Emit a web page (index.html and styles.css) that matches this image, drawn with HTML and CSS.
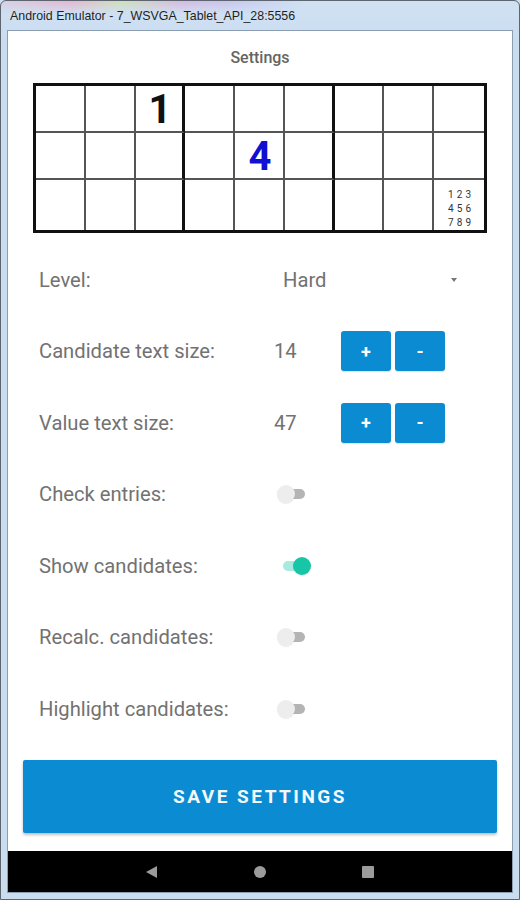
FILE: index.html
```html
<!DOCTYPE html>
<html lang="en">
<head>
<meta charset="utf-8">
<title>Android Emulator - Settings</title>
<link rel="stylesheet" href="styles.css">
</head>
<body>
<div class="window">
  <div class="titlebar">Android Emulator - 7_WSVGA_Tablet_API_28:5556</div>
  <div class="screen">
    <main class="app">
      <h1 class="title">Settings</h1>
      <div class="board">
        <div class="cell"></div><div class="cell"></div><div class="cell box-r"><span class="val">1</span></div>
        <div class="cell"></div><div class="cell"></div><div class="cell box-r"></div>
        <div class="cell"></div><div class="cell"></div><div class="cell last-c"></div>

        <div class="cell"></div><div class="cell"></div><div class="cell box-r"></div>
        <div class="cell"></div><div class="cell"><span class="val blue">4</span></div><div class="cell box-r"></div>
        <div class="cell"></div><div class="cell"></div><div class="cell last-c"></div>

        <div class="cell last-r"></div><div class="cell last-r"></div><div class="cell last-r box-r"></div>
        <div class="cell last-r"></div><div class="cell last-r"></div><div class="cell last-r box-r"></div>
        <div class="cell last-r"></div><div class="cell last-r"></div><div class="cell last-r last-c"><span class="cands">123<br>456<br>789</span></div>
      </div>

      <div class="rows">
        <div class="row">
          <span class="label">Level:</span>
          <div class="spinner"><span>Hard</span><span class="caret"></span></div>
        </div>
        <div class="row">
          <span class="label">Candidate text size:</span>
          <span class="num">14</span>
          <div class="stepper"><button class="step">+</button><button class="step">-</button></div>
        </div>
        <div class="row">
          <span class="label">Value text size:</span>
          <span class="num">47</span>
          <div class="stepper"><button class="step">+</button><button class="step">-</button></div>
        </div>
        <div class="row">
          <span class="label">Check entries:</span>
          <span class="switch"><span class="track"></span><span class="thumb"></span></span>
        </div>
        <div class="row">
          <span class="label">Show candidates:</span>
          <span class="switch on"><span class="track"></span><span class="thumb"></span></span>
        </div>
        <div class="row">
          <span class="label">Recalc. candidates:</span>
          <span class="switch"><span class="track"></span><span class="thumb"></span></span>
        </div>
        <div class="row">
          <span class="label">Highlight candidates:</span>
          <span class="switch"><span class="track"></span><span class="thumb"></span></span>
        </div>
      </div>

      <button class="save">SAVE SETTINGS</button>
    </main>
    <nav class="navbar">
      <svg class="nav-icon" width="12" height="12" viewBox="0 0 12 12"><polygon points="11,0 11,12 0,6" fill="#9b9b9b"/></svg>
      <svg class="nav-icon" width="12" height="12" viewBox="0 0 12 12"><circle cx="6" cy="6" r="6" fill="#9b9b9b"/></svg>
      <svg class="nav-icon" width="12" height="12" viewBox="0 0 12 12"><rect x="0" y="0" width="12" height="12" rx="1" fill="#9b9b9b"/></svg>
    </nav>
  </div>
</div>
</body>
</html>
```

FILE: styles.css
```css
* { box-sizing: border-box; }
html, body { margin: 0; padding: 0; }
body { width: 520px; height: 900px; overflow: hidden; background: #cddff2; font-family: Roboto, "Noto Sans", sans-serif; }

.window {
  width: 520px;
  height: 900px;
  border: 1px solid #5d6670;
  border-radius: 6px 6px 0 0;
  padding: 0 6px 6px 6px;
  display: flex;
  flex-direction: column;
  background:
    linear-gradient(to bottom, rgba(205,223,242,0) 0, #cfe0f3 13px, #cadcf0 40px),
    linear-gradient(to right, #d8d0e0 0, #e4b6cf 70px, #cfe0b8 120px, #d7b9e0 180px, #c9c6ec 230px, #cfe0f3 300px);
  background-color: #cadcf0;
}

.titlebar {
  height: 29px;
  flex: none;
  display: flex;
  align-items: center;
  padding-left: 3px;
  padding-top: 1px;
  font-family: "Liberation Sans", Arial, sans-serif;
  font-size: 12.4px;
  color: #1f1f1f;
  white-space: nowrap;
}

.screen {
  flex: 1;
  display: flex;
  flex-direction: column;
  border: 1px solid #8b9db0;
  background: #fff;
}

.app {
  height: 820px;
  flex: none;
  padding: 0 15px;
  display: flex;
  flex-direction: column;
}

.title {
  margin: 17px 0 0;
  height: 20px;
  line-height: 20px;
  text-align: center;
  font-size: 16px;
  font-weight: 500;
  color: #656565;
}

.board {
  margin: 15px 10px 0;
  height: 150px;
  border: 3px solid #111;
  display: grid;
  grid-template-columns: repeat(9, 1fr);
  grid-template-rows: repeat(3, 1fr);
}

.cell {
  border-right: 2px solid #555;
  border-bottom: 2px solid #555;
  display: flex;
  align-items: center;
  justify-content: center;
  min-width: 0;
}
.cell.box-r { border-right: 3px solid #111; }
.cell.last-c { border-right: none; }
.cell.last-r { border-bottom: none; }

.val {
  font-family: Roboto, "Noto Sans", sans-serif;
  font-weight: 700;
  font-size: 40px;
  line-height: 1;
  color: #111;
  padding-left: 2px;
  padding-top: 3px;
}
.val.blue { color: #1010d2; }

.cands {
  font-family: Roboto, sans-serif;
  font-size: 10px;
  line-height: 14px;
  letter-spacing: 3.2px;
  color: #333;
  text-align: center;
  padding-left: 4px;
  padding-top: 8px;
}

.rows {
  margin-top: 11px;
  display: flex;
  flex-direction: column;
}

.row {
  height: 71.5px;
  display: flex;
  align-items: center;
  padding-left: 16px;
}

.label {
  width: 235px;
  flex: none;
  font-size: 20.2px;
  color: #727272;
  white-space: nowrap;
}

.spinner {
  width: 192px;
  display: flex;
  align-items: center;
  justify-content: space-between;
  padding-left: 9px;
  padding-right: 9px;
  font-size: 20.2px;
  color: #727272;
}
.caret {
  width: 0; height: 0;
  border-left: 3.5px solid transparent;
  border-right: 3.5px solid transparent;
  border-top: 4px solid #777;
}

.num {
  width: 67px;
  flex: none;
  font-size: 20.2px;
  color: #727272;
}

.stepper { display: flex; gap: 4px; }
.step {
  width: 50px;
  height: 40px;
  border: none;
  border-radius: 3px;
  background: #0a8bd2;
  color: #fff;
  font-family: Roboto, sans-serif;
  font-weight: 700;
  font-size: 18px;
  padding: 0;
  box-shadow: 0 1px 1px rgba(0,0,0,0.12);
}

.switch {
  position: relative;
  width: 36px;
  height: 18px;
  flex: none;
  margin-left: 3px;
}
.switch .track {
  position: absolute;
  left: 6px;
  top: 4px;
  width: 22px;
  height: 10px;
  border-radius: 5px;
  background: #b4b4b4;
}
.switch .thumb {
  position: absolute;
  left: 0;
  top: 0;
  width: 18px;
  height: 18px;
  border-radius: 50%;
  background: #ededed;
  box-shadow: 0 1px 1px rgba(0,0,0,0.08);
}
.switch.on .track { background: #a8eadf; }
.switch.on .thumb { left: 16px; background: #17c6a6; }

.save {
  margin-top: 15px;
  height: 73px;
  border: none;
  border-radius: 2px;
  background: #0a8bd2;
  color: #f4f8fb;
  font-family: Roboto, sans-serif;
  font-weight: 700;
  font-size: 19px;
  letter-spacing: 2.5px;
  box-shadow: 0 2px 3px rgba(0,0,0,0.25);
  padding: 0;
}

.navbar {
  flex: 1;
  background: #000;
  display: flex;
  align-items: center;
  justify-content: center;
  gap: 96px;
}
.nav-icon { display: block; }
```
